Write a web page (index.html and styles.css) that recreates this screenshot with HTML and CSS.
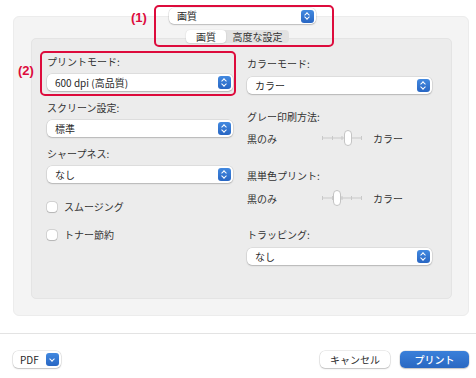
FILE: index.html
```html
<!DOCTYPE html>
<html lang="ja">
<head>
    <meta charset="UTF-8">
    <meta name="viewport" content="width=device-width, initial-scale=1.0">
    <title>プリント設定 - 画質</title>
    <link rel="stylesheet" href="styles.css">
</head>
<body>
    <div class="window">
        <div class="sheet">
            <div class="panel-picker">
                <div class="popup picker">
                    <span>画質</span>
                    <span class="stepper"></span>
                </div>
            </div>

            <div class="tabs">
                <span class="tab active">画質</span>
                <span class="tab advanced">高度な設定</span>
            </div>

            <div class="pane">
                <div class="col">
                    <div class="field-label first">プリントモード:</div>
                    <div class="popup"><span>600 dpi (高品質)</span><span class="stepper"></span></div>

                    <div class="field-label">スクリーン設定:</div>
                    <div class="popup"><span>標準</span><span class="stepper"></span></div>

                    <div class="field-label">シャープネス:</div>
                    <div class="popup"><span>なし</span><span class="stepper"></span></div>

                    <div class="check-row smoothing"><span class="checkbox"></span>スムージング</div>
                    <div class="check-row toner"><span class="checkbox"></span>トナー節約</div>
                </div>

                <div class="col right">
                    <div class="field-label first">カラーモード:</div>
                    <div class="popup"><span>カラー</span><span class="stepper"></span></div>

                    <div class="field-label gray">グレー印刷方法:</div>
                    <div class="slider-row">
                        <span class="slider-min">黒のみ</span>
                        <svg class="slider" width="40" height="16" viewBox="0 0 40 16">
                            <line x1="0.5" y1="8" x2="39.5" y2="8" stroke="#c9c9c9" stroke-width="1"/>
                            <path d="M0.5 6v4M10.5 6v4M20 6v4M29.5 6v4M39.5 6v4" stroke="#c9c9c9" stroke-width="1"/>
                            <rect x="22.5" y="0.5" width="7" height="15" rx="3.5" fill="#fff" stroke="#c4c4c4"/>
                        </svg>
                        <span>カラー</span>
                    </div>

                    <div class="field-label mono">黒単色プリント:</div>
                    <div class="slider-row second">
                        <span class="slider-min">黒のみ</span>
                        <svg class="slider" width="40" height="16" viewBox="0 0 40 16">
                            <line x1="0.5" y1="8" x2="39.5" y2="8" stroke="#c9c9c9" stroke-width="1"/>
                            <path d="M0.5 6v4M10.5 6v4M20 6v4M29.5 6v4M39.5 6v4" stroke="#c9c9c9" stroke-width="1"/>
                            <rect x="11.5" y="0.5" width="7" height="15" rx="3.5" fill="#fff" stroke="#c4c4c4"/>
                        </svg>
                        <span>カラー</span>
                    </div>

                    <div class="field-label trapping">トラッピング:</div>
                    <div class="popup"><span>なし</span><span class="stepper"></span></div>
                </div>
            </div>
        </div>

        <div class="footer">
            <div class="pdf-btn">PDF<span class="menu-arrow"></span></div>
            <div class="spacer"></div>
            <div class="btn">キャンセル</div>
            <div class="btn primary">プリント</div>
        </div>

        <!-- annotation callouts -->
        <div class="callout box-1"></div>
        <span class="callout-label label-1">(1)</span>
        <div class="callout box-2"></div>
        <span class="callout-label label-2">(2)</span>
    </div>
</body>
</html>
```

FILE: styles.css
```css
body {
    margin: 0;
    background: #fff;
    font-family: "Noto Sans CJK JP", "Noto Sans", sans-serif;
    font-size: 10px;
    color: #333;
}
.window {
    position: relative;
    width: 476px;
    height: 378px;
    overflow: hidden;
}
.sheet {
    margin: 16px 7px 0 13px;
    padding: 0 16px 17px 17px;
    height: 300px;
    box-sizing: border-box;
    background: #f4f4f4;
    border: 1px solid #ececec;
    border-radius: 6px;
}
.panel-picker {
    display: flex;
    justify-content: center;
    margin-top: -9px;
    padding-left: 2px;
}
.popup {
    display: flex;
    align-items: center;
    justify-content: space-between;
    height: 17px;
    padding: 0 2px 0 8px;
    background: #fff;
    border-radius: 5px;
    box-shadow: 0 0 0 0.5px rgba(0, 0, 0, 0.12), 0 1px 1.5px rgba(0, 0, 0, 0.18);
    line-height: 17px;
    color: #2a2a2a;
}
.popup.picker {
    width: 137px;
    height: 16px;
    line-height: 16px;
}
.stepper {
    position: relative;
    width: 13px;
    height: 13px;
    border-radius: 3px;
    background: linear-gradient(#4289e0, #2866c3);
    flex-shrink: 0;
}
.stepper::before,
.stepper::after {
    content: "";
    position: absolute;
    left: 4.4px;
    width: 3px;
    height: 3px;
    border-left: 1.2px solid #fff;
    border-top: 1.2px solid #fff;
}
.stepper::before {
    top: 3.2px;
    transform: rotate(45deg);
}
.stepper::after {
    top: 5.6px;
    transform: rotate(225deg);
}
.tabs {
    position: relative;
    z-index: 1;
    display: flex;
    width: max-content;
    margin: 6px auto -5px;
    background: #e2e2e2;
    border-radius: 4px;
    transform: translateX(-4px);
}
.tab {
    height: 13px;
    line-height: 13px;
    width: 40px;
    text-align: center;
    color: #333;
}
.tab.advanced {
    width: 63px;
}
.tab.active {
    background: #fff;
    border-radius: 4px;
    box-shadow: 0 0.5px 1.5px rgba(0, 0, 0, 0.2);
}
.pane {
    display: grid;
    grid-template-columns: 186px 185px;
    column-gap: 14px;
    height: 261px;
    box-sizing: border-box;
    padding: 16px 23px 0 15px;
    background: #ececec;
    border: 1px solid #e4e4e4;
    border-radius: 5px;
}
.col {
    display: flex;
    flex-direction: column;
}
.col.right {
    padding-top: 2px;
}
.field-label {
    height: 14px;
    line-height: 14px;
    margin: 10px 0 5px;
}
.field-label.first {
    margin-top: 0;
}
.col.right .field-label.first {
    margin-bottom: 6px;
}
.check-row {
    display: flex;
    align-items: center;
    gap: 7px;
    height: 14px;
    line-height: 14px;
    margin-top: 17px;
}
.check-row.toner {
    margin-top: 14px;
}
.checkbox {
    width: 10px;
    height: 10px;
    background: #fff;
    border-radius: 3px;
    box-shadow: 0 0 0 0.5px rgba(0, 0, 0, 0.2), 0 0.5px 1px rgba(0, 0, 0, 0.15);
}
.field-label.gray {
    margin: 16px 0 6px;
}
.field-label.mono {
    margin: 23px 0 7px;
}
.field-label.trapping {
    margin: 22px 0 6px;
}
.slider-row {
    display: flex;
    align-items: center;
    height: 16px;
}
.slider-min {
    width: 75px;
}
.slider {
    display: block;
    margin-right: 11px;
}
.footer {
    display: flex;
    align-items: center;
    margin-top: 17px;
    padding: 17px 7px 0 13px;
    border-top: 1px solid #e3e3e3;
}
.spacer {
    flex: 1;
}
.pdf-btn,
.btn {
    height: 17px;
    line-height: 17px;
    background: #fff;
    border-radius: 5px;
    box-shadow: 0 0 0 0.5px rgba(0, 0, 0, 0.14), 0 1px 1.5px rgba(0, 0, 0, 0.18);
    color: #2a2a2a;
}
.pdf-btn {
    display: flex;
    align-items: center;
    width: 48px;
    box-sizing: border-box;
    padding: 0 2px 0 7px;
    gap: 7px;
}
.menu-arrow {
    position: relative;
    width: 13px;
    height: 13px;
    border-radius: 3px;
    background: linear-gradient(#4289e0, #2866c3);
}
.menu-arrow::before {
    content: "";
    position: absolute;
    left: 4.4px;
    top: 3.6px;
    width: 3px;
    height: 3px;
    border-right: 1.2px solid #fff;
    border-bottom: 1.2px solid #fff;
    transform: rotate(45deg);
}
.btn {
    width: 70px;
    text-align: center;
}
.btn.primary {
    width: 69px;
    margin-left: 10px;
    background: linear-gradient(#3a80da, #2a68c2);
    color: #fff;
    font-weight: 500;
}
.callout {
    position: absolute;
    border: 2.5px solid #dd0b3c;
    border-radius: 5px;
    box-sizing: border-box;
}
.box-1 {
    left: 154px;
    top: 5px;
    width: 180px;
    height: 42px;
}
.box-2 {
    left: 40px;
    top: 51px;
    width: 196px;
    height: 45px;
}
.callout-label {
    position: absolute;
    font-family: "Liberation Sans", Arial, sans-serif;
    font-weight: bold;
    font-size: 13px;
    line-height: 15px;
    color: #dd0b3c;
}
.label-1 {
    left: 131px;
    top: 10px;
}
.label-2 {
    left: 18px;
    top: 63px;
}
```
